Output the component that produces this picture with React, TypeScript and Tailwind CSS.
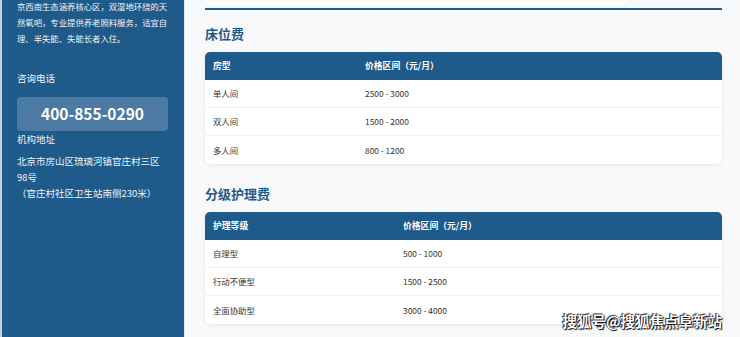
import React from "react";

const font = { fontFamily: '"Noto Sans CJK SC", "Noto Sans", sans-serif' };

function Table({
  head,
  rows,
  col1,
}: {
  head: [string, string];
  rows: [string, string][];
  col1: string;
}) {
  return (
    <div className="overflow-hidden rounded-[5px] bg-white shadow-[0_1px_4px_rgba(0,0,0,0.08)]">
      <div className="flex h-[28px] items-center bg-[#1f5b8a] text-[8.8px] font-bold text-white">
        <div className={`${col1} pl-[8px]`}>{head[0]}</div>
        <div className="pl-[8px]">{head[1]}</div>
      </div>
      {rows.map((r, i) => (
        <div
          key={i}
          className={`flex h-[28px] items-center text-[8.4px] text-[#333] ${i < rows.length - 1 ? "border-b border-[#eef1f5]" : ""}`}
        >
          <div className={`${col1} pl-[8px]`}>{r[0]}</div>
          <div className="pl-[8px]">{r[1]}</div>
        </div>
      ))}
    </div>
  );
}

export default function App() {
  return (
    <div
      className="relative flex h-[337px] w-[740px] overflow-hidden bg-[#f7f9fb]"
      style={font}
    >
      <aside className="h-full w-[185px] shrink-0 border-l-2 border-r border-l-[#c3d2df] border-r-[#dde5ed] bg-[#1f5b8a] pl-[15px] pr-[14px] text-[#eef3f8]">
        <p className="mt-[-2px] text-[8.35px] leading-[16px]">
          京西南生态涵养核心区，双湿地环绕的天然氧吧，专业提供养老照料服务，适宜自理、半失能、失能长者入住。
        </p>
        <p className="mt-[24px] text-[9.5px] leading-[16px]">咨询电话</p>
        <div className="mt-[11px] flex h-[34px] w-[151px] items-center justify-center rounded-[4px] bg-[#4c7aa2] text-[15.5px] font-bold text-white">
          400-855-0290
        </div>
        <p className="text-[9.5px] leading-[16px]">机构地址</p>
        <p className="mt-[6px] text-[9.5px] leading-[16px]">
          北京市房山区琉璃河镇官庄村三区
          <br />
          98号
          <br />
          （官庄村社区卫生站南侧230米）
        </p>
      </aside>
      <main className="flex-1 pl-[20px] pr-[18px]">
        <div className="h-[6px] w-[422px] bg-white/70 shadow-[0_1px_2px_rgba(0,0,0,0.04)]" />
        <div className="mt-[2px] h-[2px] bg-[#1f5b8a]" />
        <h2 className="mt-[15px] text-[13px] font-bold leading-[18px] text-[#1f5b8a]">
          床位费
        </h2>
        <div className="mt-[9px]">
          <Table
            col1="w-[152px]"
            head={["房型", "价格区间（元/月）"]}
            rows={[
              ["单人间", "2500 - 3000"],
              ["双人间", "1500 - 2000"],
              ["多人间", "800 - 1200"],
            ]}
          />
        </div>
        <h2 className="mt-[21px] text-[13px] font-bold leading-[18px] text-[#1f5b8a]">
          分级护理费
        </h2>
        <div className="mt-[9px]">
          <Table
            col1="w-[190px]"
            head={["护理等级", "价格区间（元/月）"]}
            rows={[
              ["自理型", "500 - 1000"],
              ["行动不便型", "1500 - 2500"],
              ["全面协助型", "3000 - 4000"],
            ]}
          />
        </div>
      </main>
      <div className="absolute right-[18px] top-[310px] text-[14.5px] font-bold leading-[22px] text-white [text-shadow:0_0_1px_#000,1px_1px_1px_#000,-1px_-1px_1px_#333]">
        搜狐号@搜狐焦点阜新站
      </div>
    </div>
  );
}
